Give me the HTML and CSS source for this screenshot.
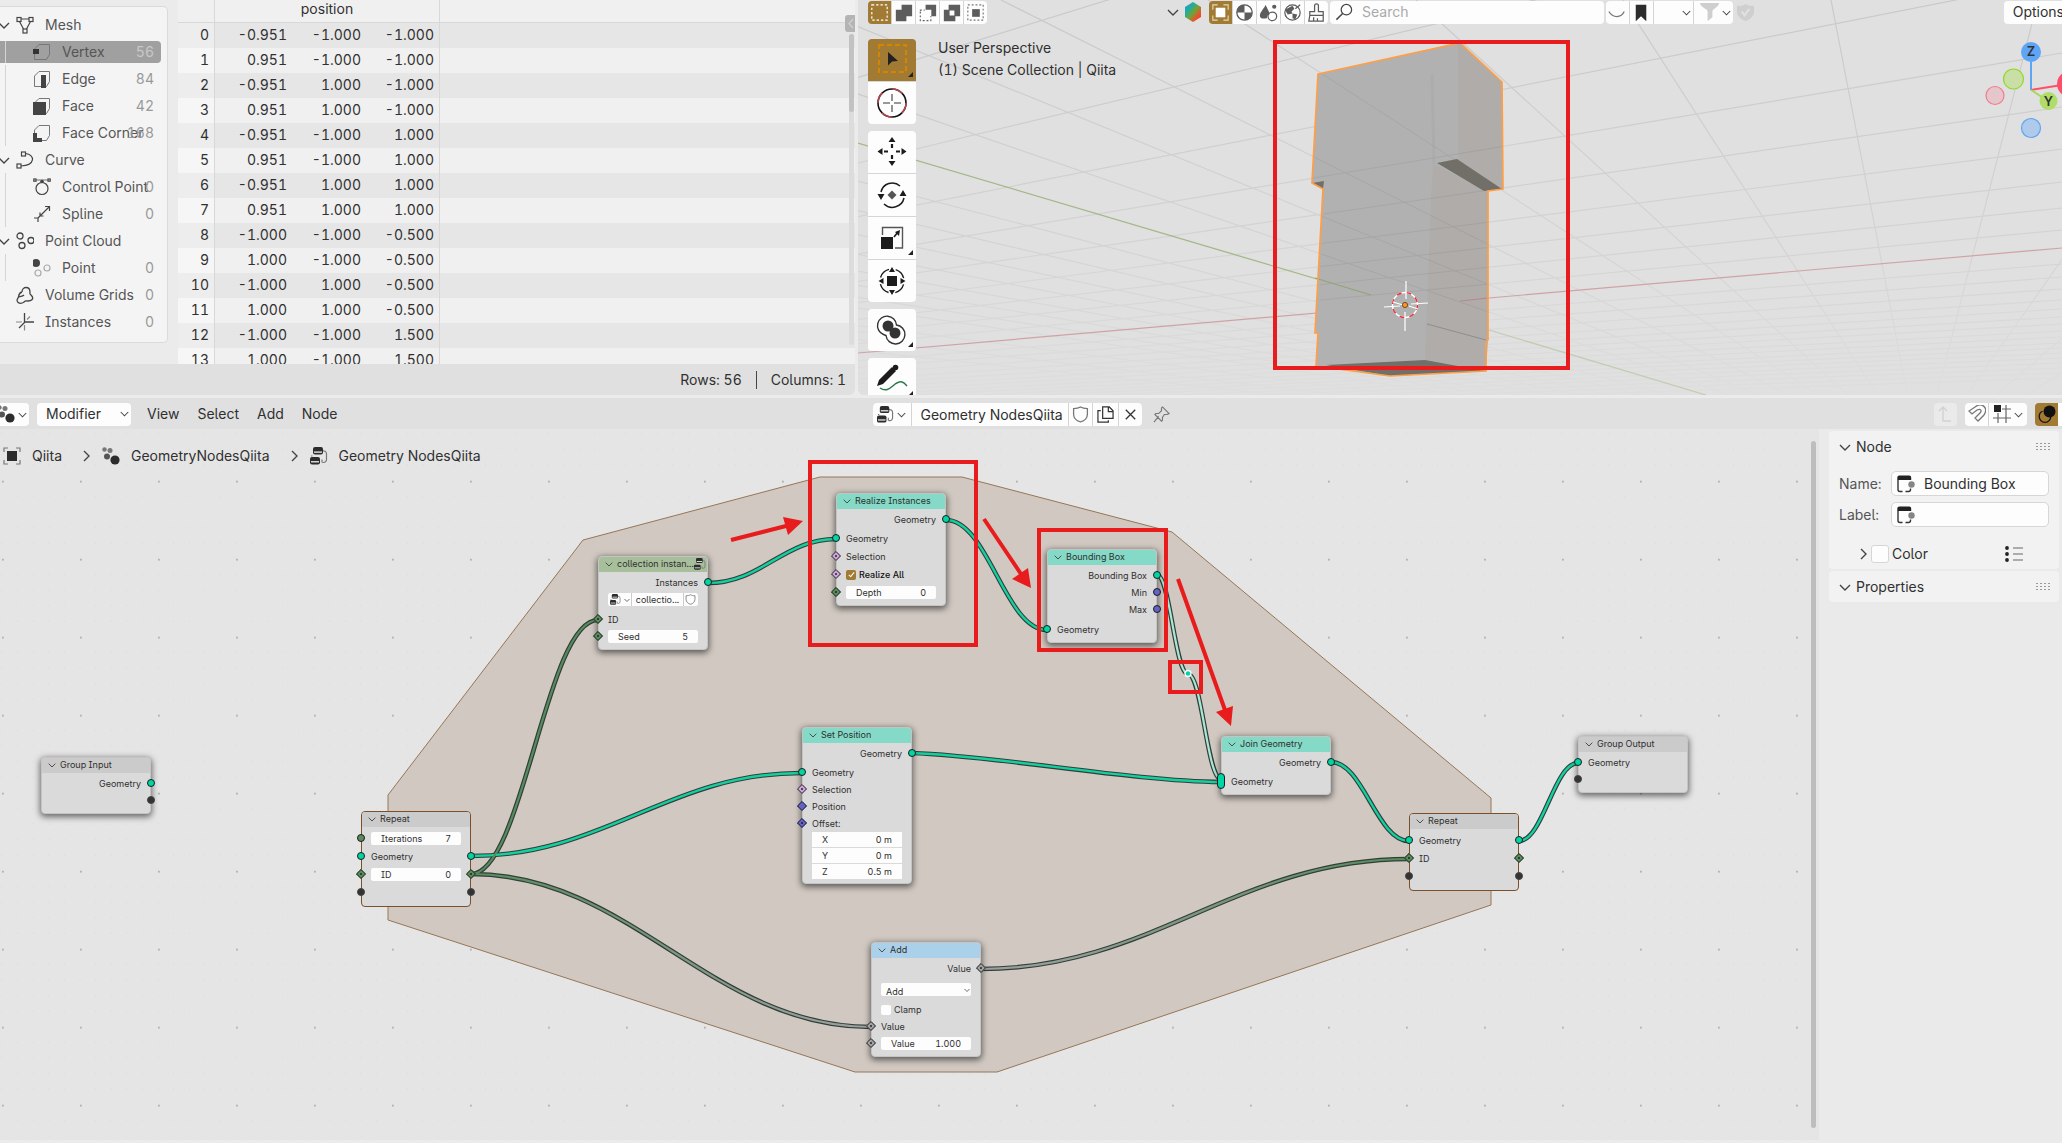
FILE: index.html
```html
<!DOCTYPE html>
<html lang="en">
<head>
<meta charset="utf-8">
<title>Geometry NodesQiita</title>
<link rel="stylesheet" href="styles.css">
</head>
<body>
<svg class="defs" aria-hidden="true">
  <symbol id="chev" viewBox="0 0 12 12"><path d="M1 4l5 5 5-5" fill="none" stroke="currentColor" stroke-width="1.4"/></symbol>
  <symbol id="chevr" viewBox="0 0 12 12"><path d="M4 1l5 5-5 5" fill="none" stroke="currentColor" stroke-width="1.4"/></symbol>
  <symbol id="tree" viewBox="0 0 18 18"><path d="M2.500 9h-1.500M9 3.500h2M12.500 4a3 3 0 0 1 4 2.500v6a3 3 0 0 1-3 3h-1M12 12.500v3" fill="none" stroke="#777" stroke-width="1.200"/><rect x="3" y="0" width="10" height="7.500" rx="2" fill="#2c2c2c"/><rect x="4" y="4.500" width="8" height="1.200" fill="#fff"/><rect x="0" y="10" width="10" height="7.500" rx="2" fill="#2c2c2c"/><rect x="1" y="14.200" width="8" height="1.200" fill="#fff"/></symbol>
  <symbol id="geonodes" viewBox="0 0 18 18"><circle cx="2.500" cy="2.500" r="2.200" fill="#777"/><circle cx="8" cy="3.500" r="2.500" fill="#777"/><circle cx="5" cy="9.500" r="3" fill="#555"/><circle cx="13" cy="13" r="4.600" fill="#2c2c2c"/></symbol>
  <symbol id="cube" viewBox="0 0 18 18"><path d="M6 1.500h10.500v10l-3 5H1.500V6z" fill="none" stroke="currentColor" stroke-width="1"/></symbol>
  <symbol id="shield" viewBox="0 0 16 16"><path d="M8 1c2 1.300 4 1.500 6.500 1.500v5c0 4-3 6.500-6.500 7.500-3.500-1-6.500-3.500-6.500-7.500v-5C4 2.500 6 2.300 8 1z" fill="none" stroke="#777" stroke-width="1.200"/></symbol>
  <symbol id="nodeicon" viewBox="0 0 18 18"><path d="M1 5V14.500a2 2 0 0 0 2 2h2.500M8.500 16.500h3a2 2 0 0 0 2-2V13.500" fill="none" stroke="#333" stroke-width="1.400"/><path d="M.3 5V2.500a2 2 0 0 1 2-2h9.900a2 2 0 0 1 2 2V5z" fill="#222"/><circle cx="14.500" cy="9.500" r="3.200" fill="#858585"/></symbol>
</svg>

<main class="app">
  <section class="sheet" aria-label="Spreadsheet">
    <div class="sheet-main">
      <nav class="datasets">
        <ul class="tree">
          <li><svg class="tw"><use href="#chev"/></svg><svg class="ic" viewBox="0 0 18 18"><g fill="none" stroke="#444" stroke-width="1.200"><rect x="1" y="1.500" width="4" height="4"/><rect x="13" y="1.500" width="4" height="4"/><rect x="7" y="13" width="4" height="4"/><path d="M5 3h8M3.500 5.500l4 7.500M14.500 5.500l-4 7.500"/></g></svg><span>Mesh</span></li>
          <li class="child on"><svg class="ic" viewBox="0 0 18 18"><use href="#cube"/><rect x="0" y="6" width="6" height="5" fill="#333"/></svg><span>Vertex</span><b>56</b></li>
          <li class="child"><svg class="ic" viewBox="0 0 18 18"><use href="#cube"/><rect x="8" y="5" width="5" height="13" fill="#444"/></svg><span>Edge</span><b>84</b></li>
          <li class="child"><svg class="ic" viewBox="0 0 18 18"><use href="#cube"/><rect x="0" y="5" width="13" height="13" fill="#444"/></svg><span>Face</span><b>42</b></li>
          <li class="child"><svg class="ic" viewBox="0 0 18 18"><use href="#cube"/><path d="M0 9h4v5h5v4H0z" fill="#444"/></svg><span>Face Corner</span><b>168</b></li>
          <li><svg class="tw"><use href="#chev"/></svg><svg class="ic" viewBox="0 0 18 18"><g fill="none" stroke="#444" stroke-width="1.200"><rect x="5.500" y="1" width="4" height="4"/><rect x="1" y="13" width="4" height="4"/><path d="M9.500 2.500c10 1 10 12-4.500 12.500"/></g></svg><span>Curve</span></li>
          <li class="child"><svg class="ic" viewBox="0 0 18 18"><g fill="none" stroke="#444" stroke-width="1.200"><circle cx="9" cy="10.500" r="6"/><path d="M3 2h12" stroke="#888"/><rect x=".8" y="1" width="2.200" height="2.200"/><rect x="15" y="1" width="2.200" height="2.200"/></g><circle cx="9" cy="3.500" r="1.800" fill="#444"/></svg><span>Control Point</span><b>0</b></li>
          <li class="child"><svg class="ic" viewBox="0 0 18 18"><path d="M1 13h4v4M5 13L16.500 1.500M12 1.500h4.500V6M7 7.500v3.500h3.500" fill="none" stroke="#444" stroke-width="1.200"/></svg><span>Spline</span><b>0</b></li>
          <li><svg class="tw"><use href="#chev"/></svg><svg class="ic" viewBox="0 0 18 18"><g fill="none" stroke="#444" stroke-width="1.300"><circle cx="4" cy="4" r="3"/><circle cx="6" cy="13.500" r="3"/><circle cx="15" cy="8.500" r="3"/></g></svg><span>Point Cloud</span></li>
          <li class="child"><svg class="ic" viewBox="0 0 18 18"><circle cx="3" cy="4" r="4" fill="#444"/><g fill="none" stroke="#aaa" stroke-width="1.200"><circle cx="5" cy="14" r="3"/><circle cx="14" cy="9" r="3"/></g></svg><span>Point</span><b>0</b></li>
          <li><svg class="ic solo" viewBox="0 0 18 18"><path d="M6 6c0-6 8-6 8 0 0 2-1 1 1 3 4 4 0 6-3 6-2 0-2-1-4 1-4 3-9 0-6-4 1-1 0-5 4-6m-3 5c2-1 3 0 5-2" fill="none" stroke="#444" stroke-width="1.300"/></svg><span>Volume Grids</span><b>0</b></li>
          <li><svg class="ic solo" viewBox="0 0 18 18"><path d="M8.500 0v10M8.500 9H18M8.500 9.500L3 15" fill="none" stroke="#444" stroke-width="1.300"/><path d="M0 9h6M8.500 12v5.500M11 6.500l3-3" fill="none" stroke="#888" stroke-width="1.200"/></svg><span>Instances</span><b>0</b></li>
        </ul>
      </nav>
      <div class="grid-wrap">
        <table class="grid">
          <colgroup><col class="c-idx"><col class="c-x"><col class="c-v"><col class="c-z"><col></colgroup>
          <thead><tr><th></th><th colspan="3">position</th><th></th></tr></thead>
          <tbody>
            <tr><th>0</th><td>-0.951</td><td>-1.000</td><td>-1.000</td><td></td></tr>
            <tr><th>1</th><td>0.951</td><td>-1.000</td><td>-1.000</td><td></td></tr>
            <tr><th>2</th><td>-0.951</td><td>1.000</td><td>-1.000</td><td></td></tr>
            <tr><th>3</th><td>0.951</td><td>1.000</td><td>-1.000</td><td></td></tr>
            <tr><th>4</th><td>-0.951</td><td>-1.000</td><td>1.000</td><td></td></tr>
            <tr><th>5</th><td>0.951</td><td>-1.000</td><td>1.000</td><td></td></tr>
            <tr><th>6</th><td>-0.951</td><td>1.000</td><td>1.000</td><td></td></tr>
            <tr><th>7</th><td>0.951</td><td>1.000</td><td>1.000</td><td></td></tr>
            <tr><th>8</th><td>-1.000</td><td>-1.000</td><td>-0.500</td><td></td></tr>
            <tr><th>9</th><td>1.000</td><td>-1.000</td><td>-0.500</td><td></td></tr>
            <tr><th>10</th><td>-1.000</td><td>1.000</td><td>-0.500</td><td></td></tr>
            <tr><th>11</th><td>1.000</td><td>1.000</td><td>-0.500</td><td></td></tr>
            <tr><th>12</th><td>-1.000</td><td>-1.000</td><td>1.500</td><td></td></tr>
            <tr><th>13</th><td>1.000</td><td>-1.000</td><td>1.500</td><td></td></tr>
          </tbody>
        </table>
        <button class="flap" aria-label="Show sidebar"><svg viewBox="0 0 10 17"><path d="M8 4L4 8.500 8 13" fill="none" stroke="#d0d0d0" stroke-width="1.200"/></svg></button>
        <div class="vbar"><i></i></div>
      </div>
    </div>
    <footer class="status"><span>Rows: 56</span><i></i><span>Columns: 1</span></footer>
  </section>

  <section class="view3d" aria-label="3D Viewport">
    <svg class="scene" aria-hidden="true">
      <defs>
        <linearGradient id="fade" gradientUnits="userSpaceOnUse" x1="0" y1="0" x2="0" y2="395"><stop offset="0" stop-color="#c9c9c9"/><stop offset=".6" stop-color="#d3d3d3"/><stop offset="1" stop-color="#dedede"/></linearGradient>
        <path id="lines" fill="none" stroke="url(#fade)" stroke-width="1.200" d="M-375 460L2062-599M-375 460L2062-296M-375 460L2062-127M-375 460L2062-21M-375 460L2062 53M-375 460L2062 107M-375 460L2062 149M-375 460L2062 182M-375 460L2062 208M-375 460L2062 230M-375 460L2062 264M-375 460L2062 277M-375 460L2062 289M-375 460L2062 300M-375 460L2062 309M-375 460L2062 317M-375 460L2062 324M-375 460L2062 331M-375 460L2062 337M-375 460L2062 343M-375 460L2062 348M-375 460L2062 353M-375 460L2062 358M-375 460L2062 363M-375 460L2062 368M-375 460L2062 373M-375 460L2062 378M1920 461L2868 0M1920 461L2660 0M1920 461L2453 0M1920 461L2245 0M1920 461L2038 0M1920 461L1831 0M1920 461L1623 0M1920 461L1416 0M1920 461L1208 0M1920 461L1001 0M1920 461L793 0M1920 461L586 0M1920 461L171 0M1920 461L-36 0M1920 461L-244 0M1920 461L-451 0M1920 461L-659 0M1920 461L-866 0M1920 461L-1074 0M1920 461L-1281 0M1920 461L-1696 0M1920 461L-2111 0M1920 461L-2526 0"/>
        <clipPath id="body"><path d="M1318 74L1460 43 1502 82 1503 189 1488 191 1488 340 1486 371 1390 376 1316 366 1318 333 1323 189 1312 183z"/></clipPath>
      </defs>
      <g transform="translate(-858 0)">
        <use href="#lines"/>
        <path d="M858 353L2062 248" stroke="#cfa3a6" stroke-width="1.200"/>
        <path d="M858 143L1371 295" stroke="#a3b988" stroke-width="1.300"/>
        <path d="M1489 330L1706 395" stroke="#c0cdb2" stroke-width="1.300"/>
        <path d="M1318 74L1460 43 1502 82 1503 189 1488 191 1488 340 1486 342 1486 371 1390 376 1316 366 1318 333 1315 333 1323 189 1312 183z" fill="#b1b1b3"/>
        <path d="M1458 43L1502 82 1503 189 1458 160zM1433 163L1484 191 1488 191 1488 340 1486 371 1458 366 1425 360 1431 200z" fill="#afadaa"/>
        <path d="M1432 74l2 90" stroke="#aeadac" stroke-width="3"/>
        <g clip-path="url(#body)" opacity=".18"><path d="M-375 460L2062 53M-375 460L2062 107M-375 460L2062 149M-375 460L2062 182M-375 460L2062 208M-375 460L2062 230M1920 461L1208 0M1920 461L1001 0M1920 461L793 0M1920 461L586 0" stroke="#777"/></g>
        <path d="M1437 163l20-4 45 30-18 2zM1312 183l12-2-1 8zM1326 365l99-5 60 11-95 5z" fill="#726f68"/>
        <path d="M1427 324l59 16" stroke="#8e8e8c"/>
        <path d="M1315 278l56 17" stroke="#8da773" stroke-width="1.300"/>
        <path d="M1460 301l28-3" stroke="#b9868a" stroke-width="1.200"/>
        <path d="M1318 74L1460 43 1502 82 1503 189 1488 191 1488 340 1486 342 1486 371 1390 376 1316 366 1318 333 1315 333 1323 189 1312 183z" fill="none" stroke="#ff9e45" stroke-width="1.700"/>
        <circle cx="1405" cy="305" r="12.500" fill="none" stroke="#fff" stroke-width="1.400"/>
        <circle cx="1405" cy="305" r="12.500" fill="none" stroke="#e8303a" stroke-width="1.400" stroke-dasharray="5 5"/>
        <path d="M1406 281v18M1405 312v19M1384 307l16-1M1411 304l17-1M1393 302l10 3M1409 306l9 3" stroke="#fff" stroke-width="1.200"/>
        <circle cx="1405" cy="305" r="2.600" fill="#ff9321" stroke="#5a3c10" stroke-width=".8"/>
        <rect x="1275" y="42" width="293" height="326" fill="none" stroke="#e81c1c" stroke-width="4"/>
      </g>
    </svg>
    <header class="vhead">
      <div class="seg">
        <button class="act" aria-label="Set selection"><svg viewBox="0 0 24 24"><rect x="4" y="4" width="16" height="16" fill="none" stroke="#fff" stroke-width="1.200" stroke-dasharray="2.500 2"/></svg></button>
        <button aria-label="Extend"><svg viewBox="0 0 24 24"><path d="M10 4h11v12h-6v5H4V9h6z" fill="#5c5c5c"/></svg></button>
        <button aria-label="Subtract"><svg viewBox="0 0 24 24"><path d="M10 4h11v12h-5V9h-6z" fill="#5c5c5c"/><path d="M4 9.500h5M4.500 11v9.500H15.500V16" fill="none" stroke="#5c5c5c" stroke-width="1.200" stroke-dasharray="2 2"/></svg></button>
        <button aria-label="Invert"><svg viewBox="0 0 24 24"><path d="M9 4h12v12h-5v5H4V9h5zM10 10v5h5v-5z" fill="#5c5c5c" fill-rule="evenodd"/></svg></button>
        <button aria-label="Intersect"><svg viewBox="0 0 24 24"><rect x="8.500" y="8.500" width="8" height="8" fill="#5c5c5c"/><rect x="4" y="4" width="16" height="16" fill="none" stroke="#777" stroke-width="1.200" stroke-dasharray="2 2"/></svg></button>
      </div>
      <div class="filters">
        <svg class="tw"><use href="#chev"/></svg>
        <svg class="hex" viewBox="0 0 18 20"><defs><linearGradient id="rgb" x1="0" y1="0" x2="1" y2="1"><stop offset="0" stop-color="#2a8df0"/><stop offset=".3" stop-color="#1fae9c"/><stop offset=".52" stop-color="#6fa338"/><stop offset=".75" stop-color="#e8542a"/><stop offset="1" stop-color="#ff2a20"/></linearGradient></defs><path d="M9 0l8 5v10l-8 5-8-5V5z" fill="url(#rgb)"/></svg>
        <div class="seg">
          <button class="act" aria-label="Object"><svg viewBox="0 0 24 24"><rect x="7" y="7" width="10" height="10" fill="#fff"/><path d="M4 9V4h5M15 4h5v5M20 15v5h-5M9 20H4v-5" fill="none" stroke="#e6d7b8" stroke-width="1.200"/></svg></button>
          <button aria-label="Material"><svg viewBox="0 0 24 24"><circle cx="12" cy="12" r="8" fill="#fff" stroke="#5c5c5c" stroke-width="1.400"/><path d="M12 4a8 8 0 0 0-8 8h8zM12 20a8 8 0 0 0 8-8h-8z" fill="#5c5c5c"/></svg></button>
          <button aria-label="Scene"><svg viewBox="0 0 24 24"><path d="M9 4c2 5 4 7 4 10-3 0-2 4-3 4-4 1-7 0-7-3 0-3 5-8 6-11z" fill="#5c5c5c"/><circle cx="18" cy="6" r="2.200" fill="#5c5c5c"/><circle cx="16" cy="16" r="4.500" fill="none" stroke="#5c5c5c" stroke-width="1.300"/></svg></button>
          <button aria-label="World"><svg viewBox="0 0 24 24"><circle cx="12" cy="12" r="8" fill="none" stroke="#5c5c5c" stroke-width="1.300"/><path d="M4 9l8-4 2 3-3 3 1 2-5 1zM12 13l5 1-2 5-3-1z" fill="#5c5c5c"/><path d="M15 8l5-4" stroke="#5c5c5c" stroke-width="1.300"/></svg></button>
          <button aria-label="Brush"><svg viewBox="0 0 24 24"><path d="M10 11V5a2 2 0 0 1 4 0v6h5v4H5v-4zM5 15l-1 6h15v-6M9 21v-4M13 21v-3" fill="none" stroke="#5c5c5c" stroke-width="1.300"/></svg></button>
        </div>
        <label class="search"><svg viewBox="0 0 20 20"><circle cx="12" cy="7" r="5.500" fill="none" stroke="#444" stroke-width="1.300"/><path d="M8 11l-6.500 6.500" stroke="#444" stroke-width="1.500"/></svg><input type="search" placeholder="Search" aria-label="Search"></label>
        <div class="seg after">
          <button aria-label="Curve falloff"><svg viewBox="0 0 24 24"><path d="M3 11c4 7 13 7 16 0" fill="none" stroke="#777" stroke-width="1.300"/></svg></button>
          <button aria-label="Bookmark"><svg viewBox="0 0 24 24"><path d="M6 4h11v17l-5.500-5L6 21z" fill="#2c2c2c"/></svg></button>
          <button class="wide" aria-label="Layout menu"><svg class="tw"><use href="#chev"/></svg></button>
          <button class="wide" aria-label="Filter menu"><svg viewBox="0 0 24 24"><path d="M2 2h20c0 4-7 6-7 9v6l-5 4V11C10 8 2 6 2 2z" fill="#cfcfcf"/></svg><svg class="tw"><use href="#chev"/></svg></button>
        </div>
        <svg class="guard" viewBox="0 0 20 20"><path d="M10 1c2 2 5 2 9 2v6c0 5-4 8-9 10-5-2-9-5-9-10V3c4 0 7 0 9-2z" fill="#cfcfcf"/><path d="M6 9l3 4 5-7" fill="none" stroke="#e2e2e2" stroke-width="2"/></svg>
      </div>
      <button class="options">Options</button>
    </header>
    <div class="vbody">
      <div class="tools">
        <div class="tgroup">
          <button class="act" aria-label="Select Box"><svg viewBox="0 0 48 42"><rect x="11" y="6" width="27" height="27" fill="none" stroke="#d68500" stroke-width="2" stroke-dasharray="5 3"/><path d="M20 13l10 9-6 .5-4 4z" fill="#222"/><path d="M45 33v5h-5z" fill="#222"/></svg></button>
          <button aria-label="Cursor"><svg viewBox="0 0 48 42"><circle cx="24" cy="21" r="14" fill="none" stroke="#111" stroke-width="1.600"/><circle cx="24" cy="21" r="14" fill="none" stroke="#b5484d" stroke-width="1.600" stroke-dasharray="11 11"/><path d="M24 12v7M24 23v7M15 21h7M26 21h7" stroke="#777" stroke-width="1.600"/></svg></button>
        </div>
        <div class="tgroup">
          <button aria-label="Move"><svg viewBox="0 0 48 42"><path d="M24 6l3.500 5h-7zM24 35l3.500-5h-7zM9.500 20.500l5-3.500v7zM38.500 20.500l-5-3.500v7z" fill="#1c1c1c"/><path d="M24 13v4M24 24v4M16 20.500h4M28 20.500h4" stroke="#1c1c1c" stroke-width="2.200"/></svg></button>
          <button aria-label="Rotate"><svg viewBox="0 0 48 42"><path d="M13 18a11.500 11.500 0 0 1 19-6M36 24a12 12 0 0 1-20 6" fill="none" stroke="#1c1c1c" stroke-width="1.500"/><path d="M24 16.500l4.500 4.500-4.500 4.500-4.500-4.500z" fill="#555"/><path d="M9.500 20h7L13 26zM31.500 22h7L35 16z" fill="#1c1c1c"/></svg></button>
          <button aria-label="Scale"><svg viewBox="0 0 48 42"><rect x="13" y="20" width="12" height="12" fill="#1c1c1c"/><path d="M14.500 18V10.500h20v20.500H27" fill="none" stroke="#555" stroke-width="1.400"/><path d="M26 20l4-5" stroke="#1c1c1c" stroke-width="1.600"/><path d="M32 13l-1 6-4-4z" fill="#1c1c1c"/><path d="M45 33v5h-5z" fill="#222"/></svg></button>
          <button aria-label="Transform"><svg viewBox="0 0 48 42"><rect x="19" y="16" width="10" height="10" fill="#1c1c1c"/><circle cx="24" cy="21" r="12" fill="none" stroke="#1c1c1c" stroke-width="1.400" stroke-dasharray="12 6.850" stroke-dashoffset="-3.400"/><path d="M24 7l3 5h-6zM24 35l3-5h-6zM10.500 21l5-3v6zM37.500 21l-5-3v6z" fill="#1c1c1c"/></svg></button>
        </div>
        <div class="tgroup"><button aria-label="Blend"><svg viewBox="0 0 48 42"><path d="M15.500 25.500a9.500 9.500 0 1 1 13-9.500 9.500 9.500 0 1 1-10.500 10.500z" fill="#fff" stroke="#333" stroke-width="1.400"/><circle cx="20" cy="17" r="5.500" fill="#333"/><circle cx="27" cy="24" r="5.500" fill="#333"/><path d="M45 33v5h-5z" fill="#222"/></svg></button></div>
        <div class="tgroup"><button aria-label="Annotate"><svg viewBox="0 0 48 42"><path d="M9 28l2-6 13-13 4 4-13 13z" fill="#1c1c1c"/><circle cx="27.500" cy="9.500" r="2.800" fill="#1c1c1c"/><path d="M12 30c10 7 14-8 22-6 3 1 4 3 5 4" fill="none" stroke="#2b7a4b" stroke-width="1.500"/><path d="M45 33v5h-5z" fill="#222"/></svg></button></div>
      </div>
      <p class="info">User Perspective<br>(1) Scene Collection | Qiita</p>
      <svg class="gizmo" viewBox="1980 36 82 106">
        <path d="M2031 90V62" stroke="#5ea5f5" stroke-width="2"/><path d="M2031 90l31-5" stroke="#ff4f68" stroke-width="2"/><path d="M2031 90l14 9" stroke="#a5d95a" stroke-width="2"/>
        <circle cx="2070" cy="84" r="13" fill="#ff4f68"/><circle cx="2031" cy="52" r="10" fill="#5ea5f5"/><circle cx="2048.500" cy="101" r="9" fill="#b0dc68"/>
        <circle cx="2013.500" cy="79" r="10" fill="#c9dfa6" stroke="#91d829" stroke-width="1.200"/><circle cx="1995" cy="95.500" r="9" fill="#e5c6cb" stroke="#f07c8d" stroke-width="1.200"/><circle cx="2031" cy="128" r="9.500" fill="#afcaea" stroke="#5ea5f5" stroke-width="1.200"/>
        <text x="2031" y="56" text-anchor="middle">Z</text><text x="2048.500" y="106" text-anchor="middle">Y</text>
      </svg>
    </div>
  </section>

  <section class="editor" aria-label="Geometry Node Editor">
    <header class="ehead">
      <div class="eleft">
        <button class="editor-type" aria-label="Editor type"><svg class="ic" viewBox="0 0 18 18"><use href="#geonodes"/></svg><svg class="tw"><use href="#chev"/></svg></button>
        <div class="pick"><select aria-label="Tree type"><option>Modifier</option></select><svg class="tw"><use href="#chev"/></svg></div>
        <nav class="menus"><a href="#">View</a><a href="#">Select</a><a href="#">Add</a><a href="#">Node</a></nav>
      </div>
      <div class="ecenter">
        <div class="seg">
          <button class="browse" aria-label="Browse node trees"><svg class="ic" viewBox="0 0 18 18"><use href="#tree"/></svg><svg class="tw"><use href="#chev"/></svg></button>
          <input class="tname" value="Geometry NodesQiita" aria-label="Node tree name">
          <button aria-label="Fake user"><svg class="ic" viewBox="0 0 16 16"><use href="#shield"/></svg></button>
          <button class="dup" aria-label="Duplicate"><svg class="ic" viewBox="0 0 18 18"><path d="M6 1h7l4 4v8H6zM12 1v5h5M4 5H1v12h11v-2" fill="none" stroke="#333" stroke-width="1.300"/></svg></button>
          <button aria-label="Unlink"><svg class="ic" viewBox="0 0 18 18"><path d="M4 4l10 10M14 4L4 14" stroke="#333" stroke-width="1.400"/></svg></button>
        </div>
        <button class="pin" aria-label="Pin"><svg class="ic" viewBox="0 0 18 18"><path d="M1 17l5-6M10 1l7 7-2 1-3 0-2 3 0 3-1 1-7-7 1-1h3l3-3 0-3z" fill="none" stroke="#777" stroke-width="1.200"/></svg></button>
      </div>
      <div class="eright">
        <button class="up" aria-label="Parent tree" disabled><svg class="ic" viewBox="0 0 18 18"><path d="M3 6l4-4 4 4M7 2v14h8" fill="none" stroke="#d2d2d2" stroke-width="1.400"/></svg></button>
        <div class="seg">
          <button aria-label="Snap"><svg class="ic" viewBox="0 0 18 18"><path d="M1 6l3 3 5-4c4-2 5 1 3 3l-5 5 3 3 6-6c5-8-3-13-9-8z" fill="none" stroke="#777" stroke-width="1.300"/></svg></button>
          <button class="browse" aria-label="Snap target"><svg class="ic" viewBox="0 0 18 18"><path d="M0 13h18M5 8v10M13 0v18M9 4h9" stroke="#666" stroke-width="1.200"/><rect x="1" y="0" width="7" height="7" fill="#222"/></svg><svg class="tw"><use href="#chev"/></svg></button>
        </div>
        <div class="seg"><button class="act" aria-label="Overlays"><svg class="ic" viewBox="0 0 18 18"><circle cx="11.500" cy="6.500" r="6" fill="#111"/><circle cx="7" cy="11.500" r="5.800" fill="none" stroke="#111" stroke-width="1.300" stroke-dasharray="24 3"/></svg></button></div>
      </div>
    </header>

    <div class="ebody">
      <div class="canvas">
        <svg class="links" aria-hidden="true">
          <defs>
            <pattern id="dots" width="78" height="78" patternUnits="userSpaceOnUse" patternTransform="translate(2 480.700)">
              <path stroke="#d8d8d8" stroke-width="1" stroke-dasharray="1 14.600" d="M-.5 0H78M-.5 15.600H78M-.5 31.200H78M-.5 46.800H78M-.5 62.400H78"/>
              <rect x="0" y="0" width="1.800" height="1.800" fill="#b0b0b0"/>
            </pattern>
            <linearGradient id="g2n" gradientUnits="userSpaceOnUse" x1="471" y1="0" x2="871" y2="0"><stop offset="0" stop-color="#598c5c"/><stop offset="1" stop-color="#a1a1a1"/></linearGradient>
            <linearGradient id="n2g" gradientUnits="userSpaceOnUse" x1="981" y1="0" x2="1408" y2="0"><stop offset="0" stop-color="#a1a1a1"/><stop offset="1" stop-color="#598c5c"/></linearGradient>
            <g id="geo" fill="none"><path d="M708 583C761 583 784 539 836 539M471 856C604 856 669 773 801 773M912 753C1000 756 1130 781 1221 782M946 520C988 520 1005 630 1047 630M1331 762C1363 762 1377 841 1409 841M1519 841C1543 841 1554 763 1578 763"/></g>
            <g id="sel" fill="none"><path d="M1157 575C1170 575 1175 674 1188 674 1202 674 1207 779 1221 779"/></g>
            <path id="int1" fill="none" d="M471 874C523 874 546 620 598 620"/>
            <path id="int2" fill="none" d="M471 874C631 874 711 1027 871 1027"/>
            <path id="int3" fill="none" d="M981 969C1152 969 1237 859 1409 859"/>
          </defs>
          <g transform="translate(0 -429)">
            <rect y="429" width="100%" height="100%" fill="url(#dots)"/>
            <path d="M388 795L583 540 820 477H962L1172 532 1491 798V905L997 1072H855L388 920z" fill="#d0c8c1" stroke="#967658"/>
            <g stroke="#303e3a" stroke-width="4.600"><use href="#geo"/><use href="#sel"/><use href="#int1"/><use href="#int2"/><use href="#int3"/></g>
            <use href="#geo" stroke="#14cf9f" stroke-width="2.400"/>
            <use href="#sel" stroke="#a9e6d4" stroke-width="2.200"/>
            <use href="#int1" stroke="#598c5c" stroke-width="2.200"/>
            <use href="#int2" stroke="url(#g2n)" stroke-width="2.200"/>
            <use href="#int3" stroke="url(#n2g)" stroke-width="2.200"/>
            <circle cx="1188" cy="673.500" r="3" fill="#00d6a3" stroke="#fff" stroke-width="1.300"/>
          </g>
        </svg>

        <nav class="crumbs">
          <svg class="ic" viewBox="0 0 18 18"><rect x="4" y="4" width="10" height="10" fill="#2c2c2c"/><path d="M1 5V1h4M13 1h4v4M17 13v4h-4M5 17H1v-4" fill="none" stroke="#777" stroke-width="1.200"/></svg><a href="#">Qiita</a>
          <svg class="sep"><use href="#chevr"/></svg>
          <svg class="ic" viewBox="0 0 18 18"><use href="#geonodes"/></svg><a href="#">GeometryNodesQiita</a>
          <svg class="sep"><use href="#chevr"/></svg>
          <svg class="ic" viewBox="0 0 18 18"><use href="#tree"/></svg><a href="#">Geometry NodesQiita</a>
        </nav>

        <article class="node n-in"><h3><svg><use href="#chev"/></svg>Group Input</h3>
          <div class="row out">Geometry<i class="s geo r"></i></div><div class="row"><i class="s dot r"></i></div></article>

        <article class="node n-rep zone loose"><h3><svg><use href="#chev"/></svg>Repeat</h3>
          <div class="row"><i class="s int"></i><label class="field">Iterations<input value="7"></label></div>
          <div class="row"><i class="s geo"></i>Geometry<i class="s geo r"></i></div>
          <div class="row"><i class="s d green"></i><label class="field">ID<input value="0"></label><i class="s d green r"></i></div>
          <div class="row"><i class="s dot"></i><i class="s dot r"></i></div></article>

        <article class="node n-col olive"><h3><svg><use href="#chev"/></svg>collection instan...<svg class="gi" viewBox="0 0 18 18"><use href="#tree"/></svg></h3>
          <div class="row out">Instances<i class="s geo r"></i></div>
          <div class="row idrow"><div class="idblock"><button class="b1" aria-label="Browse"><svg viewBox="0 0 18 18"><use href="#tree"/></svg><svg class="m"><use href="#chev"/></svg></button><input value="collectio..." aria-label="Node group"><button class="b2" aria-label="Fake user"><svg viewBox="0 0 16 16"><use href="#shield"/></svg></button></div></div>
          <div class="row in"><i class="s d green"></i>ID</div>
          <div class="row"><i class="s d green"></i><label class="field">Seed<input value="5"></label></div></article>

        <article class="node n-real teal loose"><h3><svg><use href="#chev"/></svg>Realize Instances</h3>
          <div class="row out">Geometry<i class="s geo r"></i></div>
          <div class="row in"><i class="s geo"></i>Geometry</div>
          <div class="row"><i class="s d pink"></i>Selection</div>
          <div class="row"><i class="s d pink"></i><label class="check hi"><input type="checkbox" checked>Realize All</label></div>
          <div class="row"><i class="s d green"></i><label class="field">Depth<input value="0"></label></div></article>

        <article class="node n-box teal"><h3><svg><use href="#chev"/></svg>Bounding Box</h3>
          <div class="row out">Bounding Box<i class="s geo r"></i></div>
          <div class="row out">Min<i class="s vec r"></i></div>
          <div class="row out">Max<i class="s vec r"></i></div>
          <div class="row in"><i class="s geo"></i>Geometry</div></article>

        <article class="node n-pos teal"><h3><svg><use href="#chev"/></svg>Set Position</h3>
          <div class="row out">Geometry<i class="s geo r"></i></div>
          <div class="row in"><i class="s geo"></i>Geometry</div>
          <div class="row"><i class="s d pink"></i>Selection</div>
          <div class="row"><i class="s d blue solid"></i>Position</div>
          <div class="row"><i class="s d blue"></i>Offset:</div>
          <div class="stack"><label class="field">X<input value="0 m"></label><label class="field">Y<input value="0 m"></label><label class="field">Z<input value="0.5 m"></label></div></article>

        <article class="node n-join teal"><h3><svg><use href="#chev"/></svg>Join Geometry</h3>
          <div class="row out">Geometry<i class="s geo r"></i></div>
          <div class="row in"><i class="s geo multi"></i>Geometry</div></article>

        <article class="node n-add sky"><h3><svg><use href="#chev"/></svg>Add</h3>
          <div class="row out">Value<i class="s d gray r"></i></div>
          <div class="row menu"><div class="nsel"><select aria-label="Operation"><option>Add</option></select><svg><use href="#chev"/></svg></div></div>
          <div class="row clamp"><label class="check"><input type="checkbox">Clamp</label></div>
          <div class="row"><i class="s d gray"></i>Value</div>
          <div class="row"><i class="s d gray"></i><label class="field">Value<input value="1.000"></label></div></article>

        <article class="node n-rep2 zone loose"><h3><svg><use href="#chev"/></svg>Repeat</h3>
          <div class="row"><i class="s geo"></i>Geometry<i class="s geo r"></i></div>
          <div class="row"><i class="s d green"></i>ID<i class="s d green r"></i></div>
          <div class="row"><i class="s dot"></i><i class="s dot r"></i></div></article>

        <article class="node n-out"><h3><svg><use href="#chev"/></svg>Group Output</h3>
          <div class="row"><i class="s geo"></i>Geometry</div><div class="row"><i class="s dot"></i></div></article>

        <svg class="marks" aria-hidden="true">
          <g transform="translate(0 -429)" fill="none" stroke="#e81c1c" stroke-width="4">
            <rect x="810" y="462" width="166" height="183"/><rect x="1039" y="530" width="127" height="120"/><rect x="1170" y="662" width="31" height="30"/>
            <path d="M731 540L786 526M984 519L1021 574M1178 579L1225 710"/>
            <path stroke="none" fill="#e81c1c" d="M783 517L803 521 788 535zM1028 568L1031 588 1012 579zM1216 712L1233 706 1231 726z"/>
          </g>
        </svg>
        <div class="cbar"></div>
      </div>

      <aside class="side">
        <section class="panel">
          <h2><svg class="tw"><use href="#chev"/></svg>Node<i class="grip"></i></h2>
          <div class="prop"><label for="nname">Name:</label><div class="box"><svg class="ic" viewBox="0 0 18 18"><use href="#nodeicon"/></svg><input id="nname" value="Bounding Box"></div></div>
          <div class="prop"><label for="nlabel">Label:</label><div class="box"><svg class="ic" viewBox="0 0 18 18"><use href="#nodeicon"/></svg><input id="nlabel" value=""></div></div>
          <div class="color"><svg class="tw"><use href="#chevr"/></svg><label><input type="checkbox">Color</label><svg class="list" viewBox="0 0 18 16"><g fill="#222"><circle cx="2" cy="2" r="1.900"/><circle cx="2" cy="8" r="1.900"/><circle cx="2" cy="14" r="1.900"/></g><path d="M8 2h10M8 8h10M8 14h10" stroke="#666" stroke-width="1.200"/></svg></div>
        </section>
        <section class="panel"><h2><svg class="tw"><use href="#chev"/></svg>Properties<i class="grip"></i></h2></section>
      </aside>
    </div>
  </section>
</main>
</body>
</html>
```
FILE: styles.css
```css
* { box-sizing: border-box; }
body {
  margin: 0;
  background: #ebebeb;
  color: #303030;
  font: 14px/20px Inter, "Liberation Sans", sans-serif;
  font-feature-settings: "cv05", "cv08", "tnum";
}
svg { display: block; flex: none; }
.defs { position: absolute; width: 0; height: 0; }
button, input, select {
  margin: 0; padding: 0; border: 0; background: none; color: inherit;
  font: inherit; font-feature-settings: inherit; border-radius: 0; min-width: 0;
}
select { appearance: none; }
a { color: inherit; text-decoration: none; }
h2, h3, p, ul { margin: 0; padding: 0; font-weight: 400; font-size: inherit; list-style: none; }
.tw { width: 12px; height: 12px; color: #444; }
.ic { width: 18px; height: 18px; color: #777; }

.app {
  display: grid;
  grid-template-columns: 855fr 1204fr;
  grid-template-rows: minmax(395px, 34vh) 1fr;
  gap: 3px;
  min-height: 100vh;
  padding-bottom: 3px;
}

/* spreadsheet */
.sheet { display: flex; flex-direction: column; overflow: hidden; border-radius: 0 0 6px 0; background: #efefef; }
.sheet-main { flex: 1; display: flex; min-height: 0; overflow: hidden; }
.datasets { width: 178px; background: #ebebeb; padding-top: 6px; }
.tree { position: relative; width: 168px; padding: 4px 6px 7px 0; background: #f4f4f4; border: 1px solid #dadada; border-left: 0; border-radius: 0 5px 5px 0; color: #555; }
.tree li { display: flex; align-items: center; height: 27px; position: relative; }
.tree .tw { margin-right: 6px; margin-left: -2px; }
.tree .ic { margin-right: 11px; }
.tree .solo { margin-left: 16px; }
.tree span { white-space: nowrap; }
.tree .child { padding-left: 33px; }
.tree .child::before { content: ""; position: absolute; left: 5px; top: 0; bottom: 0; width: 1px; background: #d4d4d4; }
.tree b { position: absolute; right: 7px; font-weight: 400; color: #999; }
.tree .on { height: 22px; margin: 3px 0 2px; background: #a0a0a0; border-radius: 0 4px 4px 0; }
.tree .on b { color: #c8c8c8; }
.grid-wrap { flex: 1; position: relative; overflow: hidden; }
.grid { width: 100%; table-layout: fixed; border-collapse: separate; border-spacing: 0; }
.c-idx { width: 37px; } .c-x { width: 77px; } .c-v { width: 74px; } .c-z { width: 74px; }
.grid thead th { height: 23px; padding: 0 0 5px; line-height: 17px; border-bottom: 1px solid #d8d8d8; background: #f0f0f0; font-weight: 400; }
.grid th, .grid td:nth-child(4) { border-right: 1px solid #d8d8d8; }
.grid thead th:last-child { border-right: 0; }
.grid tbody th, .grid td { height: 25px; padding: 0 5px 2px; text-align: right; font-weight: 400; }
.grid tbody th { background: #f6f6f6; }
.grid td { background: #f0f0f0; }
.grid tbody tr:nth-child(odd) th { background: #ededed; }
.grid tbody tr:nth-child(odd) td { background: #e6e6e6; }
.flap { position: absolute; right: 0; top: 15px; width: 10px; height: 17px; background: #b4b4b4; border-radius: 3px 0 0 3px; }
.vbar { position: absolute; right: 1px; top: 34px; bottom: 19px; width: 5px; background: #dcdcdc; border-radius: 3px; }
.vbar i { display: block; height: 25%; background: #c2c2c2; border-radius: 3px; }
.status { display: flex; align-items: center; justify-content: flex-end; gap: 14px; height: 31px; padding-right: 9px; background: #e0e0e0; }
.status i { width: 1px; height: 18px; background: #444; }

/* 3D viewport */
.view3d { position: relative; overflow: hidden; border-radius: 0 0 0 6px; background: #e0e0e0; }
.scene { position: absolute; inset: 0; width: 100%; height: 100%; }
.vhead { position: relative; display: flex; align-items: center; height: 24px; padding-left: 10px; }
.seg { display: flex; gap: 1px; border-radius: 4px; overflow: hidden; background: #d4d4d4; }
.seg button { display: flex; align-items: center; justify-content: center; width: 23px; height: 23px; background: #fdfdfd; }
.seg .act, .tgroup .act { background: #a17a33; }
.vhead .seg button > svg:first-child:not(.tw) { width: 23px; height: 23px; }
.filters { display: flex; align-items: center; flex: 1; margin-left: 180px; }
.hex { width: 18px; height: 20px; margin: 0 7px 0 5px; }
.search { display: flex; align-items: center; width: 274px; height: 23px; margin: 0 2px; padding: 0 5px; gap: 8px; background: #fdfdfd; border-radius: 4px; }
.search svg { width: 19px; height: 19px; }
.search input { flex: 1; outline: 0; }
.search input::placeholder { color: #aaa; opacity: 1; }
.seg .wide { width: 39px; justify-content: flex-end; padding-right: 2px; gap: 1px; }
.guard { width: 19px; height: 19px; margin-left: 3px; }
.options { height: 23px; padding-left: 9px; margin-right: -2px; background: #fdfdfd; border-radius: 4px 0 0 4px; }
.vbody { position: relative; display: flex; align-items: flex-start; padding: 15px 0 0 10px; }
.tools { display: flex; flex-direction: column; gap: 7px; }
.tgroup { display: flex; flex-direction: column; gap: 1px; border-radius: 4px; overflow: hidden; background: #d6d6d6; }
.tgroup button { width: 48px; height: 42px; background: #fdfdfd; }
.info { margin-left: 22px; margin-top: -2px; line-height: 22px; flex: 1; }
.gizmo { width: 82px; height: 106px; margin-top: -3px; }
.gizmo text { font-size: 13px; font-weight: 600; fill: #333; }

/* node editor */
.editor { grid-column: 1 / -1; display: flex; flex-direction: column; background: #e5e5e5; }
.ehead { display: grid; grid-template-columns: 1fr auto 1fr; align-items: center; height: 31px; padding-top: 1px; background: #e0e0e0; }
.eleft, .ecenter, .eright { display: flex; align-items: center; }
.editor-type { display: flex; align-items: center; justify-content: flex-end; gap: 3px; width: 29px; height: 23px; padding-right: 2px; background: #fdfdfd; border-radius: 0 4px 4px 0; }
.pick { position: relative; width: 94px; height: 23px; margin-left: 8px; background: #fdfdfd; border-radius: 4px; }
.pick select { width: 100%; height: 100%; padding-left: 9px; }
.pick .tw { position: absolute; right: 2px; top: 6px; pointer-events: none; }
.pick .tw, .browse .tw, .editor-type .tw, .wide .tw { width: 9px; height: 9px; }
.menus { display: flex; gap: 18px; margin-left: 16px; }
.seg .browse { width: 38px; gap: 3px; }
.seg .tname { width: 156px; padding-left: 9px; background: #fdfdfd; height: 23px; }
.seg .dup { width: 25px; }
.ecenter { margin-right: 20px; }
.ecenter .ic { width: 17px; height: 17px; }
.pin { margin-left: 11px; }
.eright { justify-content: flex-end; gap: 8px; }
.up { width: 23px; height: 23px; padding: 2px; background: #eaeaea; border-radius: 4px; }
.eright .seg:last-child { border-radius: 4px 0 0 4px; border-right: 4px solid #fdfdfd; }
.ebody { flex: 1; display: flex; }
.canvas { position: relative; flex: 1; overflow: hidden; }
.links, .marks { position: absolute; inset: 0; width: 100%; height: 100%; }
.marks { pointer-events: none; }
.crumbs { position: relative; display: flex; align-items: center; padding: 17px 0 0 3px; }
.crumbs .ic { margin-right: 11px; }
.crumbs .sep { width: 12px; height: 12px; margin: 0 10px 0 18px; color: #444; }
.cbar { position: absolute; right: 3px; top: 12px; bottom: 12px; width: 5px; border-radius: 3px; background: #bdbdbd; }

.node { position: absolute; width: 110px; padding-bottom: 4px; background: #dadada; border: 1px solid #c4c4c4; border-radius: 4px; box-shadow: 0 2px 6px 1px rgba(0,0,0,.55); font-size: 9px; line-height: 17px; }
.node h3 { display: flex; align-items: center; height: 15px; margin-bottom: 2px; padding: 0 0 1px 6px; background: #cbcbcb; border-radius: 3px 3px 0 0; font-size: 9px; line-height: 14px; }
.node h3 svg { width: 8px; height: 8px; margin-right: 4px; color: #444; }
.node h3 .gi { width: 12px; height: 12px; margin: 0; }
.teal h3 { background: #84dac6; } .olive h3 { background: #a8bf9b; } .sky h3 { background: #abd1ea; }
.zone { border-color: #7b4f2a; box-shadow: none; padding-bottom: 5px; }
.zone h3 { margin-bottom: 3px; }
.row { position: relative; display: flex; align-items: center; height: 17px; padding: 0 9px; }
.loose .row + .row { margin-top: 1px; }
.row.out { justify-content: flex-end; }
.row.in, .loose .row.in { margin-top: 2px; }
.n-col .row.in, .n-box .row.in { margin-top: 3px; }
.field { flex: 1; display: flex; justify-content: space-between; align-items: center; width: 100%; height: 13px; padding: 0 10px; background: #fdfdfd; border-radius: 2px; }
.field input { width: 32px; text-align: right; height: 13px; }
.stack { display: grid; gap: 1px; margin: 0 9px; }
.stack .field { height: 15px; border-radius: 0; }
.check { display: flex; align-items: center; gap: 3px; }
.check input { appearance: none; width: 10px; height: 10px; background: #fdfdfd; border-radius: 2px; }
.check input:checked { background: #a17a33; position: relative; }
.check input:checked::after { content: ""; position: absolute; left: 4px; top: 1px; width: 2px; height: 5px; border: solid #fff; border-width: 0 1px 1px 0; transform: rotate(40deg); }
.hi { font-weight: 500; color: #111; }
.idblock { flex: 1; display: flex; gap: 1px; height: 13px; background: #ccc; border-radius: 2px; overflow: hidden; }
.idblock > * { height: 13px; background: #fdfdfd; }
.idblock input { flex: 1; width: 20px; text-align: center; }
.idblock .b1 { display: flex; align-items: center; justify-content: center; gap: 3px; width: 23px; }
.idblock .b2 { width: 14px; padding: 1px; }
.idblock svg { width: 11px; height: 11px; }
.idblock .m { width: 6px; height: 6px; }
.nsel { flex: 1; position: relative; height: 13px; background: #fdfdfd; border-radius: 2px; }
.nsel select { width: 100%; height: 13px; padding-left: 5px; display: block; }
.nsel svg { position: absolute; right: 1px; top: 4px; width: 6px; height: 6px; }
.row.menu { margin-top: 4px; }
.row.clamp { margin-top: 3px; }

.s { position: absolute; left: -5px; top: 4px; width: 8px; height: 8px; border: 1px solid #1c1c1c; border-radius: 50%; }
.s.r { left: auto; right: -5px; }
.geo { background: #00d6a3; } .vec { background: #6363c7; } .int { background: #598c5c; }
.dot { background: #333; border-color: #444; }
.d { border-radius: 0; transform: rotate(45deg) scale(.9); }
.d::after { content: ""; position: absolute; left: 2px; top: 2px; width: 2px; height: 2px; border-radius: 50%; background: #1c1c1c; }
.solid::after { display: none; }
.green { background: #598c5c; } .pink { background: #cca6d6; } .blue { background: #6363c7; } .gray { background: #a1a1a1; }
.s.multi { top: 0; height: 16px; border-radius: 4px; }

.n-in { left: 41px; top: 328px; } .n-rep { left: 361px; top: 382px; } .n-col { left: 598px; top: 127px; }
.n-real { left: 836px; top: 64px; } .n-box { left: 1047px; top: 120px; } .n-pos { left: 802px; top: 298px; }
.n-join { left: 1221px; top: 307px; } .n-add { left: 871px; top: 513px; } .n-rep2 { left: 1409px; top: 384px; }
.n-out { left: 1578px; top: 307px; }

/* sidebar */
.side { width: 243px; padding: 2px 3px 0 10px; background: #eaeaea; }
.panel { margin-bottom: 2px; background: #f2f2f2; border-radius: 4px; }
.panel h2 { display: flex; align-items: center; height: 31px; padding: 0 9px 0 10px; gap: 5px; }
.grip { margin-left: auto; width: 14px; height: 7px; background: repeating-linear-gradient(90deg, #999 0 2px, transparent 2px 4px) top / 100% 1px repeat-x, repeating-linear-gradient(90deg, #999 0 2px, transparent 2px 4px) center / 100% 1px repeat-x, repeating-linear-gradient(90deg, #999 0 2px, transparent 2px 4px) bottom / 100% 1px repeat-x; }
.prop { display: flex; align-items: center; justify-content: space-between; margin: 0 10px 6px 10px; color: #555; }
.panel h2 + .prop { padding-top: 9px; }
.box { display: flex; align-items: center; gap: 9px; width: 158px; height: 25px; padding: 0 5px; background: #fdfdfd; border: 1px solid #d6d6d6; border-radius: 5px; color: #303030; }
.box input { flex: 1; outline: 0; }
.color { display: flex; align-items: center; padding: 10px 36px 5px 28px; height: 36px; }
.color label { display: flex; align-items: center; gap: 3px; flex: 1; margin-left: 2px; }
.color input { appearance: none; width: 18px; height: 18px; background: #fdfdfd; border: 1px solid #d6d6d6; border-radius: 3px; }
.list { width: 18px; height: 16px; }
```
